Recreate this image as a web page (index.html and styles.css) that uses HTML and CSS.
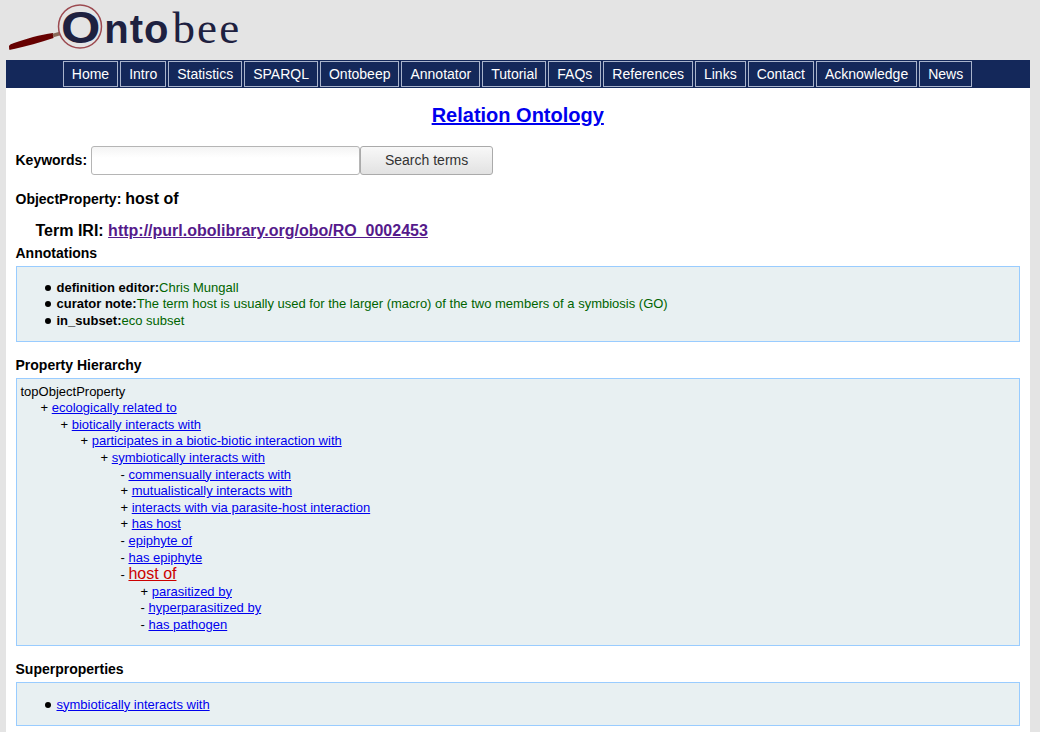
FILE: index.html
```html
<!DOCTYPE html>
<html lang="en">
<head>
  <meta charset="UTF-8">
  <title>Ontobee: host of</title>
  <link rel="stylesheet" href="styles.css">
</head>
<body>
  <div class="page">
    <div class="header">
      <div class="logo">
        <svg class="logo-glass" width="120" height="60" viewBox="0 0 120 60">
          <path d="M3 46 C4 44.500 5 44 8 43 C20 39 34 34.500 47 33 L47.500 38 C34 42.500 20 46.500 8 49 C5 49.700 3.500 50 3.200 49.500 Z" fill="#660000"/>
          <path d="M47 35.500 L54 33.500" stroke="#8a6a5a" stroke-width="3.500"/>
          <circle cx="74" cy="26.500" r="21.500" fill="none" stroke="#9c4a50" stroke-width="1.500"/>
        </svg>
        <span class="logo-text"><b class="logo-o">O</b><b class="logo-nto">nto</b><span class="logo-bee">bee</span></span>
      </div>
    </div>
    <div class="nav">
      <a href="#">Home</a>
      <a href="#">Intro</a>
      <a href="#">Statistics</a>
      <a href="#">SPARQL</a>
      <a href="#">Ontobeep</a>
      <a href="#">Annotator</a>
      <a href="#">Tutorial</a>
      <a href="#">FAQs</a>
      <a href="#">References</a>
      <a href="#">Links</a>
      <a href="#">Contact</a>
      <a href="#">Acknowledge</a>
      <a href="#">News</a>
    </div>
    <div class="main">
      <h1 class="title"><a href="#">Relation Ontology</a></h1>
      <form class="search">
        <label for="keywords">Keywords:</label>
        <input id="keywords" type="text">
        <button type="button">Search terms</button>
      </form>
      <div class="term-name">ObjectProperty: <span>host of</span></div>
      <div class="term-iri">Term IRI: <a class="visited" href="#">http://purl.obolibrary.org/obo/RO_0002453</a></div>

      <div class="section-title first">Annotations</div>
      <div class="box annotations">
        <ul>
          <li><b>definition editor:</b><span class="value">Chris Mungall</span></li>
          <li><b>curator note:</b><span class="value">The term host is usually used for the larger (macro) of the two members of a symbiosis (GO)</span></li>
          <li><b>in_subset:</b><span class="value">eco subset</span></li>
        </ul>
      </div>

      <div class="section-title">Property Hierarchy</div>
      <div class="box hierarchy">
        <div>topObjectProperty</div>
        <div class="lvl1">+ <a href="#">ecologically related to</a></div>
        <div class="lvl2">+ <a href="#">biotically interacts with</a></div>
        <div class="lvl3">+ <a href="#">participates in a biotic-biotic interaction with</a></div>
        <div class="lvl4">+ <a href="#">symbiotically interacts with</a></div>
        <div class="lvl5">- <a href="#">commensually interacts with</a></div>
        <div class="lvl5">+ <a href="#">mutualistically interacts with</a></div>
        <div class="lvl5">+ <a href="#">interacts with via parasite-host interaction</a></div>
        <div class="lvl5">+ <a href="#">has host</a></div>
        <div class="lvl5">- <a href="#">epiphyte of</a></div>
        <div class="lvl5">- <a href="#">has epiphyte</a></div>
        <div class="lvl5 current-row">- <a class="current" href="#">host of</a></div>
        <div class="lvl6">+ <a href="#">parasitized by</a></div>
        <div class="lvl6">- <a href="#">hyperparasitized by</a></div>
        <div class="lvl6">- <a href="#">has pathogen</a></div>
      </div>

      <div class="section-title">Superproperties</div>
      <div class="box supers">
        <ul>
          <li><a href="#">symbiotically interacts with</a></li>
        </ul>
      </div>
    </div>
  </div>
</body>
</html>
```

FILE: styles.css
```css
html, body {
  margin: 0;
  padding: 0;
}
body {
  background-color: #e4e4e4;
  font-family: "Liberation Sans", Arial, sans-serif;
  font-size: 13px;
  color: #000;
}
.page {
  margin: 0 10px 0 6px;
}
.header {
  height: 60px;
}
.logo {
  position: relative;
  width: 260px;
  height: 60px;
}
.logo-glass {
  position: absolute;
  left: 0;
  top: 0;
}
.logo-text {
  position: absolute;
  left: 55px;
  top: 0;
  display: flex;
  align-items: baseline;
  height: 60px;
  color: #1e2140;
  font-size: 40px;
  line-height: 55px;
  white-space: nowrap;
}
.logo-o {
  display: inline-block;
  margin-right: 9px;
  font-size: 44px;
  transform: scaleX(1.15);
  transform-origin: left;
}
.logo-nto {
  letter-spacing: 1px;
}
.logo-bee {
  margin-left: 3px;
  font-family: "Liberation Serif", "Times New Roman", serif;
  font-size: 45px;
  letter-spacing: 2.200px;
}
.nav {
  display: flex;
  justify-content: center;
  gap: 2px;
  height: 28px;
  padding: 1px 1px 0 0;
  box-sizing: border-box;
  background-color: #14285a;
}
.nav a {
  height: 26px;
  box-sizing: border-box;
  padding: 0 8px;
  border: 1px solid #a9b4cc;
  color: #fff;
  font-size: 14px;
  line-height: 24px;
  text-decoration: none;
}
.main {
  background: #fff;
  padding: 14px 10px 6px 9.500px;
}
.title {
  margin: 0 0 18px;
  font-size: 20px;
  line-height: 26px;
  text-align: center;
}
a {
  color: #0000ee;
}
a.visited {
  color: #551a8b;
}
.search {
  display: flex;
  align-items: center;
  height: 29px;
}
.search label {
  margin: 0 4px 2px 0;
  font-size: 14px;
  font-weight: bold;
}
.search input {
  width: 269px;
  height: 29px;
  box-sizing: border-box;
  padding: 0 6px;
  border: 1px solid #b5b5b5;
  border-radius: 3px;
  background: linear-gradient(#f4f4f4, #fff 40%);
}
.search button {
  width: 133px;
  height: 29px;
  padding-bottom: 3px;
  border: 1px solid #aaa;
  border-radius: 3px;
  background: linear-gradient(#f8f8f8, #e2e2e2);
  color: #333;
  font-family: inherit;
  font-size: 14px;
}
.term-name {
  margin-top: 14px;
  font-size: 14px;
  font-weight: bold;
  line-height: 20px;
}
.term-name span {
  font-size: 16px;
}
.term-iri {
  margin-top: 12px;
  padding-left: 20px;
  font-size: 16px;
  font-weight: bold;
  line-height: 20px;
}
.section-title {
  margin-top: 15px;
  font-size: 14px;
  font-weight: bold;
  line-height: 16px;
}
.section-title.first {
  margin-top: 4px;
}
.box {
  margin-top: 5px;
  border: 1px solid #99ccff;
  background-color: #e8f0f2;
  line-height: 16.700px;
}
.box ul {
  margin: 0;
  padding-left: 40px;
  list-style: none;
}
.box li {
  position: relative;
}
.box li::before {
  content: "";
  position: absolute;
  left: -12px;
  top: 5px;
  width: 6px;
  height: 6px;
  border-radius: 50%;
  background: #000;
}
.annotations {
  height: 76px;
  box-sizing: border-box;
  padding-top: 12.500px;
}
.value {
  color: #006400;
}
.hierarchy {
  height: 268px;
  box-sizing: border-box;
  padding: 4.600px 4px 0;
  line-height: 16.600px;
}
.lvl1 { padding-left: 20px; }
.lvl2 { padding-left: 40px; }
.lvl3 { padding-left: 60px; }
.lvl4 { padding-left: 80px; }
.lvl5 { padding-left: 100px; }
.lvl6 { padding-left: 120px; }
.current-row {
  height: 17.600px;
}
.current {
  color: #cc0000;
  font-size: 16px;
}
.supers {
  height: 44px;
  box-sizing: border-box;
  padding-top: 13.500px;
}
```
